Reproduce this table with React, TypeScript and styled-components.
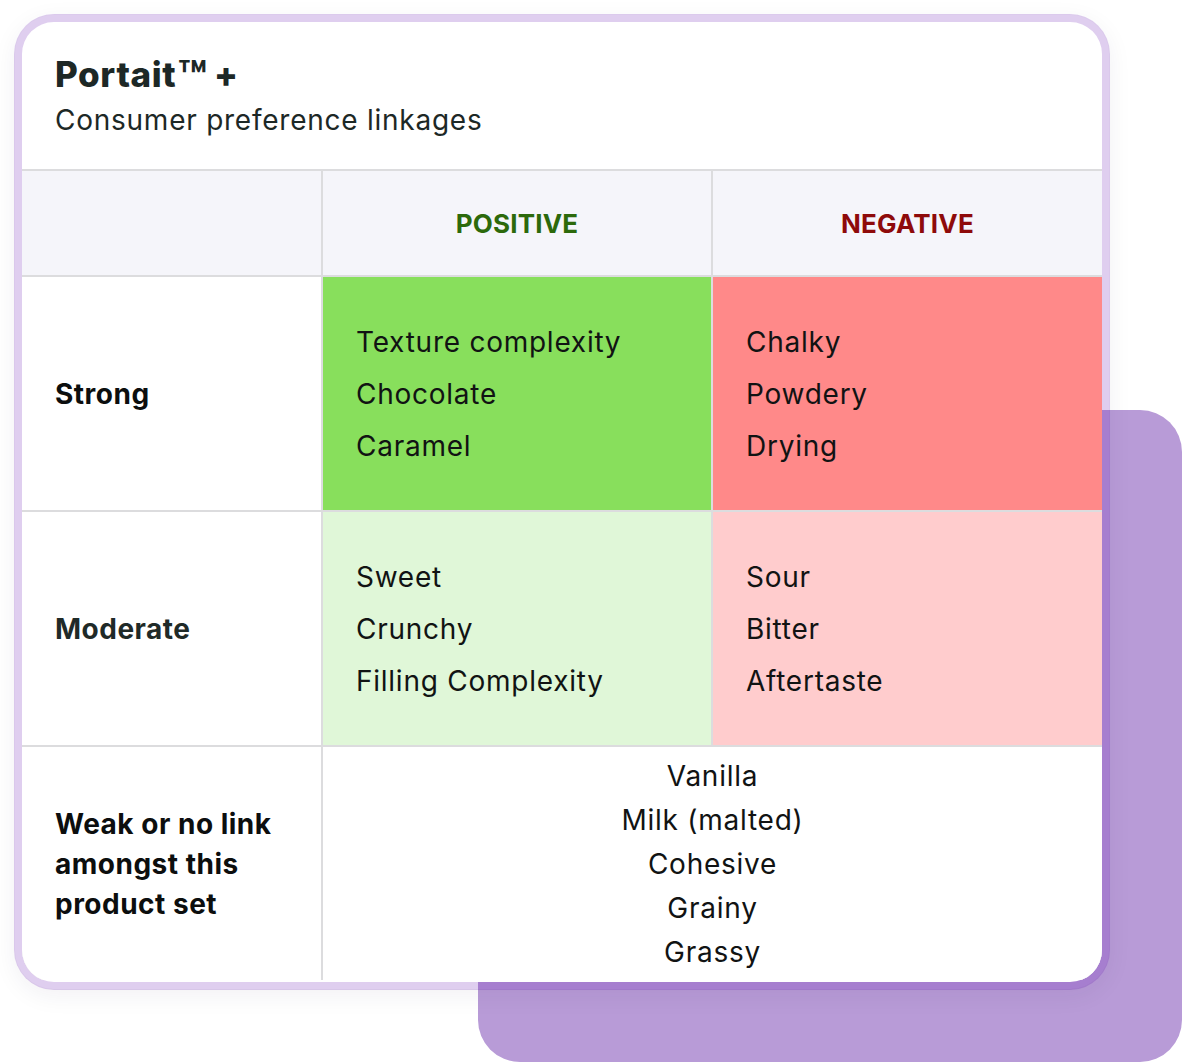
import React from "react";
import styled, { createGlobalStyle, css } from "styled-components";

const GlobalStyle = createGlobalStyle`
  html, body {
    margin: 0;
    padding: 0;
    background: #ffffff;
  }
  body {
    font-family: Inter, "Noto Sans", "Liberation Sans", sans-serif;
    -webkit-font-smoothing: antialiased;
  }
  * { box-sizing: border-box; }
`;

const Page = styled.div`
  position: relative;
  width: 1182px;
  height: 1062px;
  padding: 14px 0 0 14px;
  overflow: hidden;
`;

const Backdrop = styled.div`
  position: absolute;
  left: 478px;
  top: 410px;
  width: 704px;
  height: 652px;
  border-radius: 42px;
  background: #b89bd7;
  z-index: 0;
`;

const Card = styled.section`
  position: relative;
  z-index: 1;
  width: 1096px;
  height: 976px;
  border: 8px solid rgba(95, 10, 175, 0.2);
  border-radius: 40px;
  background: #ffffff;
  background-clip: padding-box;
  box-shadow: 0 6px 24px rgba(40, 20, 70, 0.06);
  overflow: hidden;
  display: flex;
  flex-direction: column;
`;

const CardHeader = styled.header`
  height: 147px;
  padding: 32px 33px 0;
  display: flex;
  flex-direction: column;
  gap: 8px;
  color: #1d2826;
`;

const Title = styled.h1`
  margin: 0;
  font-size: 35px;
  line-height: 40px;
  font-weight: 800;
  letter-spacing: 0.6px;
`;

const Trademark = styled.span`
  font-size: 1.35em;
  line-height: 0;
  vertical-align: -0.15em;
  font-weight: 700;
  margin: 0 6px 0 1px;
`;

const Subtitle = styled.p`
  margin: 0;
  font-size: 28px;
  line-height: 36px;
  font-weight: 400;
  letter-spacing: 0.75px;
`;

const Matrix = styled.div`
  display: grid;
  grid-template-columns: 299px 388px 389px;
  grid-template-rows: 104px 233px 233px 233px;
  gap: 2px;
  background: #dcdcde;
  border-top: 2px solid #dcdcde;
`;

const CornerCell = styled.div`
  background: #f5f5fa;
`;

const ColumnHead = styled.div<{ $tone: "positive" | "negative" }>`
  background: #f5f5fa;
  display: flex;
  align-items: center;
  justify-content: center;
  font-size: 26px;
  font-weight: 700;
  letter-spacing: 0.2px;
  color: ${(p) => (p.$tone === "positive" ? "#2c690b" : "#8e0a0a")};
`;

const RowLabel = styled.div<{ $muted?: boolean }>`
  background: #ffffff;
  display: flex;
  align-items: center;
  padding: 0 30px 0 33px;
  font-size: 28px;
  line-height: 40px;
  font-weight: 700;
  letter-spacing: 0.5px;
  color: ${(p) => (p.$muted ? "#1f2a28" : "#0c0e0e")};
`;

const toneColors = {
  strongPositive: "#88df5c",
  strongNegative: "#ff8989",
  moderatePositive: "#e0f7d8",
  moderateNegative: "#ffcccd",
};

const TraitCell = styled.div<{ $tone: keyof typeof toneColors }>`
  background: ${(p) => toneColors[p.$tone]};
  display: flex;
  align-items: center;
  padding: 0 33px;
`;

const listBase = css`
  margin: 0;
  padding: 0;
  list-style: none;
  font-size: 28px;
  font-weight: 400;
  letter-spacing: 0.75px;
  color: #111313;
`;

const TraitList = styled.ul`
  ${listBase};
  line-height: 52px;
`;

const WeakCell = styled.div`
  grid-column: 2 / span 2;
  background: #ffffff;
  display: flex;
  align-items: center;
  justify-content: center;
`;

const WeakList = styled.ul`
  ${listBase};
  line-height: 44px;
  text-align: center;
`;

const rows = {
  strong: {
    positive: ["Texture complexity", "Chocolate", "Caramel"],
    negative: ["Chalky", "Powdery", "Drying"],
  },
  moderate: {
    positive: ["Sweet", "Crunchy", "Filling Complexity"],
    negative: ["Sour", "Bitter", "Aftertaste"],
  },
};

const weak = ["Vanilla", "Milk (malted)", "Cohesive", "Grainy", "Grassy"];

export default function App() {
  return (
    <>
      <GlobalStyle />
      <Page>
        <Backdrop />
        <Card>
          <CardHeader>
            <Title>
              Portait<Trademark>™</Trademark>+
            </Title>
            <Subtitle>Consumer preference linkages</Subtitle>
          </CardHeader>
          <Matrix>
            <CornerCell />
            <ColumnHead $tone="positive">POSITIVE</ColumnHead>
            <ColumnHead $tone="negative">NEGATIVE</ColumnHead>

            <RowLabel>Strong</RowLabel>
            <TraitCell $tone="strongPositive">
              <TraitList>
                {rows.strong.positive.map((t) => (
                  <li key={t}>{t}</li>
                ))}
              </TraitList>
            </TraitCell>
            <TraitCell $tone="strongNegative">
              <TraitList>
                {rows.strong.negative.map((t) => (
                  <li key={t}>{t}</li>
                ))}
              </TraitList>
            </TraitCell>

            <RowLabel $muted>Moderate</RowLabel>
            <TraitCell $tone="moderatePositive">
              <TraitList>
                {rows.moderate.positive.map((t) => (
                  <li key={t}>{t}</li>
                ))}
              </TraitList>
            </TraitCell>
            <TraitCell $tone="moderateNegative">
              <TraitList>
                {rows.moderate.negative.map((t) => (
                  <li key={t}>{t}</li>
                ))}
              </TraitList>
            </TraitCell>

            <RowLabel>Weak or no link amongst this product set</RowLabel>
            <WeakCell>
              <WeakList>
                {weak.map((t) => (
                  <li key={t}>{t}</li>
                ))}
              </WeakList>
            </WeakCell>
          </Matrix>
        </Card>
      </Page>
    </>
  );
}
